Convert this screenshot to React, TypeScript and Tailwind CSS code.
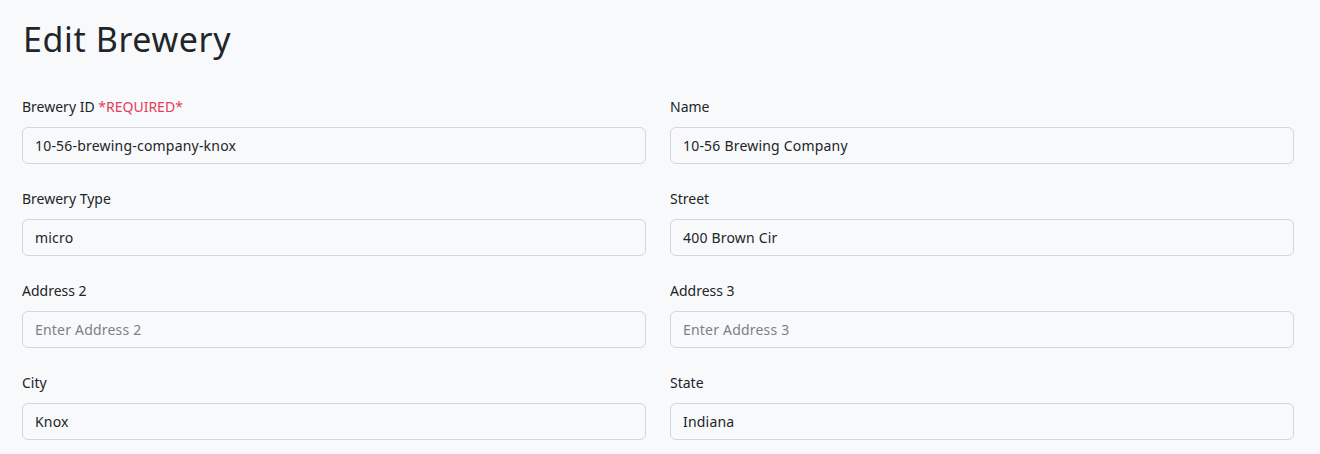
import React from "react";

const fields: { label: string; value?: string; placeholder?: string; required?: boolean }[] = [
  { label: "Brewery ID", value: "10-56-brewing-company-knox", required: true },
  { label: "Name", value: "10-56 Brewing Company" },
  { label: "Brewery Type", value: "micro" },
  { label: "Street", value: "400 Brown Cir" },
  { label: "Address 2", placeholder: "Enter Address 2" },
  { label: "Address 3", placeholder: "Enter Address 3" },
  { label: "City", value: "Knox" },
  { label: "State", value: "Indiana" },
];

const font = "'Noto Sans', Lato, sans-serif";

export default function App() {
  return (
    <div
      className="min-h-screen bg-[#f8f9fa] pl-[22px] pr-[26px] pt-[20px] text-[#212529]"
      style={{ fontFamily: font }}
    >
      <h1 className="text-[34px] leading-[38px] font-normal tracking-[0.6px] ml-[1px]">Edit Brewery</h1>
      <form className="mt-[38px] grid grid-cols-2 gap-x-6 gap-y-6">
        {fields.map((f) => (
          <div key={f.label} className="flex flex-col">
            <label className="text-[14px] leading-[21px] mb-[10px]">
              {f.label}
              {f.required && <span className="text-[#e4405a]"> *REQUIRED*</span>}
            </label>
            <input
              type="text"
              defaultValue={f.value}
              placeholder={f.placeholder}
              className="h-[37px] w-full rounded-[6px] border border-[#d3d6da] bg-[#f8f9fa] px-3 text-[14px] tracking-[0.2px] text-[#212529] placeholder:text-[#7b8189] outline-none"
              style={{ fontFamily: font }}
            />
          </div>
        ))}
      </form>
    </div>
  );
}
